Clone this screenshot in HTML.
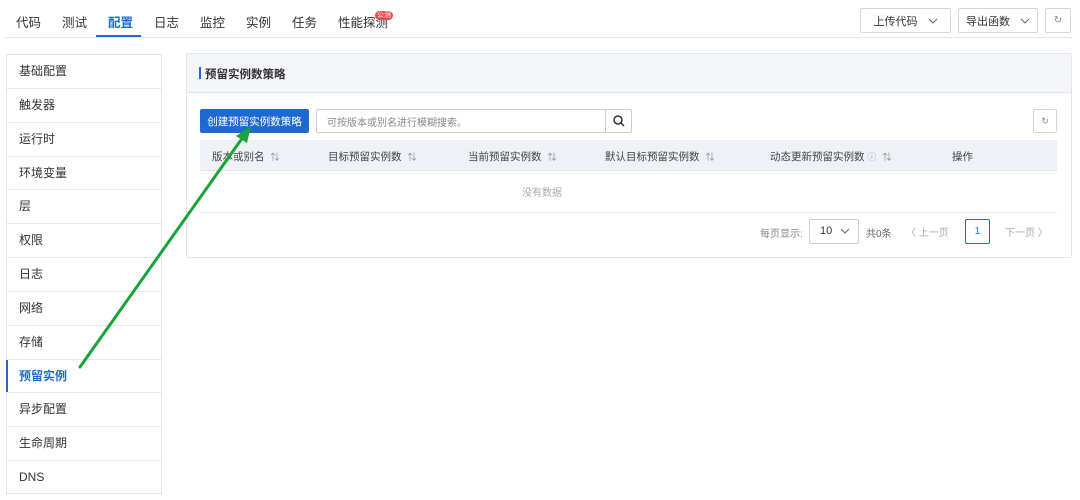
<!DOCTYPE html>
<html><head><meta charset="utf-8"><style>
*{box-sizing:border-box;margin:0;padding:0}
body{width:1080px;height:500px;background:#fff;font-family:"Liberation Sans","Noto Sans CJK SC",sans-serif;font-size:12px;color:#333;position:relative;overflow:hidden}
.abs{position:absolute}
.tab{position:absolute;top:12px;font-size:12.5px;color:#333}
.btn{position:absolute;border:1px solid #d5d5d5;background:#fff;font-size:11px;color:#333;display:flex;align-items:center;justify-content:center;border-radius:2px}
.side{position:absolute;left:6px;top:54px;width:156px;height:440px;border:1px solid #e5e5e5}
.si{height:33.85px;border-bottom:1px solid #e8e8e8;padding-left:12px;line-height:33px;font-size:12px;color:#333;position:relative}
.si:last-child{border-bottom:none}
.si.act{color:#1f6ad1;font-weight:bold}
.si.act:before{content:"";position:absolute;left:-1px;top:0;bottom:0;width:2px;background:#1f6ad1}
.th{position:absolute;top:149px;font-size:10.5px;color:#444}
.s{color:#888;font-size:9px;margin-left:6px}
</style></head><body>
<div class="tab" style="left:16px">代码</div>
<div class="tab" style="left:62px">测试</div>
<div class="tab" style="left:108px;color:#1f6ad1;font-weight:bold">配置</div>
<div class="tab" style="left:154px">日志</div>
<div class="tab" style="left:200px">监控</div>
<div class="tab" style="left:246px">实例</div>
<div class="tab" style="left:292px">任务</div>
<div class="tab" style="left:338px">性能探测</div>
<div class="abs" style="left:375px;top:11px;background:#f0454a;color:#fff;font-size:7px;border-radius:5px;padding:0 2px;line-height:9px">公测</div>
<div class="abs" style="left:96px;top:35px;width:45px;height:2px;background:#1f6ad1"></div>
<div class="abs" style="left:4px;top:37px;width:1068px;height:1px;background:#e5e5e5"></div>
<div class="btn" style="left:860px;top:8px;width:91px;height:25px">上传代码<svg style="margin-left:10px" width="10" height="6" viewBox="0 0 10 6"><path d="M1 1l4 4 4-4" fill="none" stroke="#666"/></svg></div>
<div class="btn" style="left:958px;top:8px;width:80px;height:25px">导出函数<svg style="margin-left:10px" width="10" height="6" viewBox="0 0 10 6"><path d="M1 1l4 4 4-4" fill="none" stroke="#666"/></svg></div>
<div class="btn" style="left:1045px;top:8px;width:26px;height:25px;color:#888;font-size:10px">↻</div>

<div class="side">
<div class="si">基础配置</div><div class="si">触发器</div><div class="si">运行时</div><div class="si">环境变量</div><div class="si">层</div><div class="si">权限</div><div class="si">日志</div><div class="si">网络</div><div class="si">存储</div><div class="si act">预留实例</div><div class="si">异步配置</div><div class="si">生命周期</div><div class="si">DNS</div>
</div>

<div class="abs" style="left:186px;top:53px;width:886px;height:205px;border:1px solid #e5e5e5;border-radius:2px"></div>
<div class="abs" style="left:187px;top:54px;width:884px;height:39px;background:#f4f6f9;border-bottom:1px solid #e5e5e5"></div>
<div class="abs" style="left:199px;top:67px;width:2px;height:12px;background:#1f6ad1"></div>
<div class="abs" style="left:205px;top:66px;font-size:11.5px;font-weight:bold;color:#333">预留实例数策略</div>
<div class="abs" style="left:200px;top:109px;width:109px;height:24px;background:#1f6ad1;color:#fff;font-size:10.5px;display:flex;align-items:center;justify-content:center;border-radius:2px">创建预留实例数策略</div>
<div class="abs" style="left:316px;top:109px;width:316px;height:24px;border:1px solid #ccc;border-radius:2px"></div>
<div class="abs" style="left:327px;top:114px;font-size:10px;color:#888">可按版本或别名进行模糊搜索。</div>
<div class="abs" style="left:605px;top:109px;width:1px;height:24px;background:#ccc"></div>
<svg class="abs" style="left:612px;top:114px" width="14" height="14" viewBox="0 0 14 14"><circle cx="6" cy="6" r="4" fill="none" stroke="#333" stroke-width="1.5"/><path d="M9 9l3 3" stroke="#333" stroke-width="1.5"/></svg>
<div class="btn" style="left:1033px;top:109px;width:24px;height:24px;color:#888;font-size:9px">↻</div>

<div class="abs" style="left:200px;top:140px;width:857px;height:31px;background:#eef1f6;border-bottom:1px solid #e2e2e2"></div>
<div class="th" style="left:212px">版本或别名<span class="s">⇅</span></div>
<div class="th" style="left:328px">目标预留实例数<span class="s">⇅</span></div>
<div class="th" style="left:468px">当前预留实例数<span class="s">⇅</span></div>
<div class="th" style="left:605px">默认目标预留实例数<span class="s">⇅</span></div>
<div class="th" style="left:770px">动态更新预留实例数 <span style="color:#aaa;font-size:9px">ⓘ</span><span class="s">⇅</span></div>
<div class="th" style="left:952px">操作</div>
<div class="abs" style="left:522px;top:184px;font-size:10px;color:#aaa">没有数据</div>
<div class="abs" style="left:200px;top:212px;width:857px;height:1px;background:#e8e8e8"></div>

<div class="abs" style="left:760px;top:225px;font-size:10px;color:#888">每页显示:</div>
<div class="abs" style="left:809px;top:219px;width:50px;height:25px;border:1px solid #ccc;border-radius:2px;font-size:11px;padding-left:10px;line-height:23px">10</div>
<svg class="abs" style="left:840px;top:228px" width="10" height="6" viewBox="0 0 10 6"><path d="M1 1l4 4 4-4" fill="none" stroke="#666"/></svg>
<div class="abs" style="left:866px;top:225px;font-size:10px;color:#666">共0条</div>
<div class="abs" style="left:906px;top:224px;font-size:10px;color:#aaa">〈 上一页</div>
<div class="abs" style="left:965px;top:219px;width:25px;height:25px;border:1px solid #1f6ad1;color:#1f6ad1;font-size:10px;text-align:center;line-height:23px;border-radius:2px">1</div>
<div class="abs" style="left:1005px;top:224px;font-size:10px;color:#aaa">下一页 〉</div>

<svg class="abs" style="left:0;top:0" width="1080" height="500"><path d="M80 367L243 137" stroke="#1aa33a" stroke-width="3" stroke-linecap="round"/><polygon points="251,126 236,136 247,143" fill="#1aa33a"/></svg>
</body></html>
